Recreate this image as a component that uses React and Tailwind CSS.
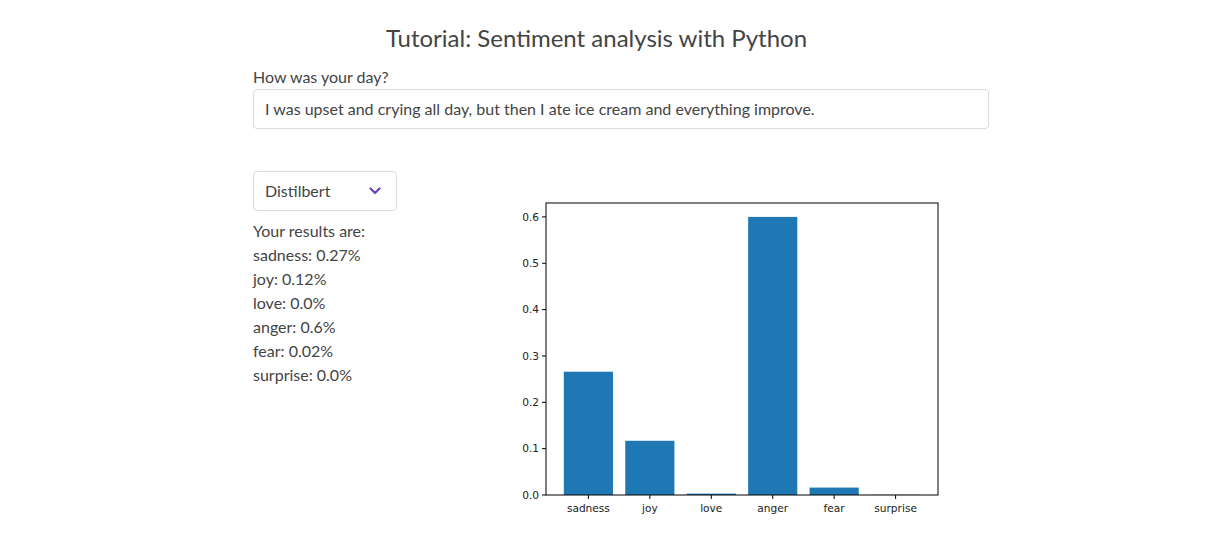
const results = [
  { name: "sadness", label: "0.27", value: 0.266 },
  { name: "joy", label: "0.12", value: 0.117 },
  { name: "love", label: "0.0", value: 0.003 },
  { name: "anger", label: "0.6", value: 0.6 },
  { name: "fear", label: "0.02", value: 0.016 },
  { name: "surprise", label: "0.0", value: 0.0005 },
]

function Chart() {
  // axes box inside the figure, in px
  const left = 63
  const top = 45
  const right = 455
  const bottom = 337
  const unit = (right - left) / 6.38
  const yScale = (bottom - top) / 0.63
  const ticks = [0, 0.1, 0.2, 0.3, 0.4, 0.5, 0.6]

  return (
    <svg width="506" height="379" viewBox="0 0 506 379" className="shrink-0">
      {results.map((r, i) => {
        const cx = left + (i + 0.69) * unit
        const h = r.value * yScale
        return (
          <rect
            key={r.name}
            x={cx - 0.4 * unit}
            y={bottom - h}
            width={0.8 * unit}
            height={h}
            fill="#1f77b4"
          />
        )
      })}
      <rect x={left} y={top} width={right - left} height={bottom - top} fill="none" stroke="#000" strokeWidth="1" />
      {ticks.map((t) => {
        const y = bottom - t * yScale
        return (
          <g key={t}>
            <line x1={left - 4} x2={left} y1={y} y2={y} stroke="#000" strokeWidth="1" />
            <text
              x={left - 7}
              y={y + 3.8}
              textAnchor="end"
              fontSize="10.6"
              fontFamily="DejaVu Sans, sans-serif"
              fill="#222"
            >
              {t.toFixed(1)}
            </text>
          </g>
        )
      })}
      {results.map((r, i) => {
        const cx = left + (i + 0.69) * unit
        return (
          <g key={r.name}>
            <line x1={cx} x2={cx} y1={bottom} y2={bottom + 4} stroke="#000" strokeWidth="1" />
            <text
              x={cx}
              y={bottom + 16.5}
              textAnchor="middle"
              fontSize="10.6"
              fontFamily="DejaVu Sans, sans-serif"
              fill="#222"
            >
              {r.name}
            </text>
          </g>
        )
      })}
    </svg>
  )
}

export default function App() {
  return (
    <div className="h-[543px] w-full overflow-hidden bg-white font-['Lato','Open_Sans',sans-serif] text-[#444]">
      <h1 className="w-[1193px] pt-[22px] text-center text-[24px] leading-8 font-normal">
        Tutorial: Sentiment analysis with Python
      </h1>
      <div className="ml-[253px] w-[736px]">
        <label className="mt-[11px] block text-[16px] leading-6">How was your day?</label>
        <div className="flex h-10 items-center rounded border border-[#dadada] pl-[11px] text-[16px]">
          I was upset and crying all day, but then I ate ice cream and everything improve.
        </div>
        <div className="mt-[29px] flex flex-row items-start">
          <div className="w-[144px] shrink-0 pt-[13px]">
            <div className="flex h-10 items-center justify-between rounded border border-[#dadada] pr-[15px] pl-[11px] text-[16px]">
              <span>Distilbert</span>
              <svg width="12" height="8" viewBox="0 0 12 8">
                <path d="M1.5 1.5 L6 6 L10.5 1.5" fill="none" stroke="#6f42c1" strokeWidth="2.2" strokeLinecap="round" strokeLinejoin="round" />
              </svg>
            </div>
            <div className="mt-2 text-[16px] leading-6">
              <div>Your results are:</div>
              {results.map((r) => (
                <div key={r.name}>
                  {r.name}: {r.label}%
                </div>
              ))}
            </div>
          </div>
          <div className="ml-[86px]">
            <Chart />
          </div>
        </div>
      </div>
    </div>
  )
}
